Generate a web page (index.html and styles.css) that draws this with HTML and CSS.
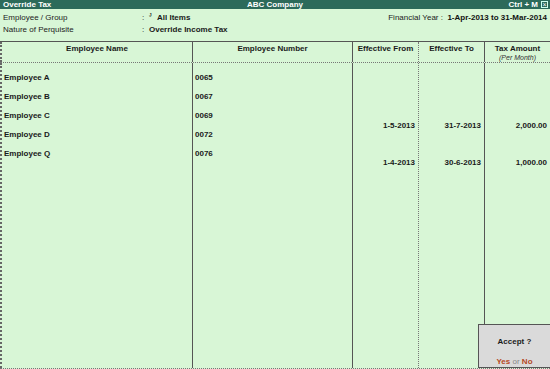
FILE: index.html
```html
<!DOCTYPE html>
<html>
<head>
<meta charset="utf-8">
<link rel="stylesheet" href="styles.css">
</head>
<body>
<div class="screen">
  <div class="titlebar">
    <span class="t-left">Override Tax</span>
    <span class="t-center">ABC Company</span>
    <span class="t-right">Ctrl + M <span class="close">×</span></span>
  </div>
  <div class="info">
    <div class="info-row">
      <span class="lbl">Employee / Group</span>
      <span class="colon">:</span>
      <span class="mark">ᴶ</span>
      <span class="val">All Items</span>
      <span class="fy">Financial Year :&nbsp; <b>1-Apr-2013 to 31-Mar-2014</b></span>
    </div>
    <div class="info-row">
      <span class="lbl">Nature of Perquisite</span>
      <span class="colon">:</span>
      <span class="val val2">Override Income Tax</span>
    </div>
  </div>
  <div class="table">
    <div class="head">
      <div class="hc c1">Employee Name</div>
      <div class="hc c2">Employee Number</div>
      <div class="hc c3">Effective From</div>
      <div class="hc c4">Effective To</div>
      <div class="hc c5">Tax Amount<span class="sub">(Per Month)</span></div>
    </div>
    <div class="body">
      <div class="col c1 names">
        <div class="line">Employee A</div>
        <div class="line">Employee B</div>
        <div class="line">Employee C</div>
        <div class="line">Employee D</div>
        <div class="line">Employee Q</div>
      </div>
      <div class="col c2 names">
        <div class="line">0065</div>
        <div class="line">0067</div>
        <div class="line">0069</div>
        <div class="line">0072</div>
        <div class="line">0076</div>
      </div>
      <div class="col c3 vals">
        <div class="line">1-5-2013</div>
        <div class="line">1-4-2013</div>
      </div>
      <div class="col c4 vals">
        <div class="line">31-7-2013</div>
        <div class="line">30-6-2013</div>
      </div>
      <div class="col c5 vals">
        <div class="line">2,000.00</div>
        <div class="line">1,000.00</div>
      </div>
    </div>
  </div>
  <div class="accept">
    <div class="q">Accept ?</div>
    <div class="yn"><span class="y">Yes</span> <span class="or">or</span> <span class="y">No</span></div>
  </div>
</div>
</body>
</html>
```

FILE: styles.css
```css
* { box-sizing: border-box; margin: 0; padding: 0; }
html, body { width: 550px; height: 369px; overflow: hidden; }
body { font-family: "Liberation Sans", Arial, sans-serif; font-size: 8px; color: #1a1a1a; background: #d8f6d6; }
.screen { position: relative; width: 550px; height: 369px; display: flex; flex-direction: column; background: #d8f6d6; }

.titlebar { height: 9px; background: #2c6a5a; color: #fff; font-weight: bold; font-size: 8px; line-height: 9px; display: flex; justify-content: space-between; align-items: center; padding: 0 2px 0 3px; position: relative; }
.t-center { position: absolute; left: 0; right: 0; text-align: center; pointer-events: none; }
.t-right { display: flex; align-items: center; gap: 3px; }
.close { display: inline-block; width: 7px; height: 7px; border: 1px solid #cfe; background: #2c6a5a; color: #fff; font-size: 7px; line-height: 5px; text-align: center; font-weight: normal; }

.info { height: 32px; padding-top: 2px; }
.info-row { display: flex; align-items: center; height: 12.5px; position: relative; }
.lbl { width: 142px; padding-left: 3px; color: #222; }
.colon { width: 7px; color: #222; }
.mark { width: 8px; font-size: 7px; font-weight: bold; position: relative; top: -2px; }
.val { font-weight: bold; }
.val2 { margin-left: 0; }
.fy { position: absolute; right: 3px; color: #222; }
.fy b { color: #111; }

.table { flex: 1; display: flex; flex-direction: column; border-top: 1px solid #555; }
.head { display: grid; grid-template-columns: 192px 160px 66px 66px 66px; height: 21px; border-bottom: 1px dotted #777; }
.hc { font-weight: bold; text-align: center; padding-top: 2px; line-height: 10px; display: flex; flex-direction: column; align-items: center; }
.sub { font-weight: normal; font-style: italic; font-size: 7px; line-height: 8px; color: #333; }
.c1 { border-left: 2px dotted #666; }
.c2 { border-left: 1px solid #555; }
.c3 { border-left: 1px solid #555; }
.c4 { border-left: 1px dotted #777; }
.c5 { border-left: 1px solid #555; }

.body { flex: 1; display: grid; grid-template-columns: 192px 160px 66px 66px 66px; border-bottom: 1px dotted #777; }
.col { display: flex; flex-direction: column; font-weight: bold; }
.line { height: 19px; line-height: 19px; }
.names { padding-top: 5px; padding-left: 2px; }
.c1.names { padding-left: 2px; }
.vals { padding-top: 53px; gap: 18px; text-align: right; padding-right: 3px; }

.accept { position: absolute; left: 478px; top: 324px; width: 72px; height: 44px; background: #dadada; border: 1px solid #555; border-right: none; display: flex; flex-direction: column; align-items: center; }
.q { font-weight: bold; margin-top: 12px; line-height: 10px; }
.yn { margin-top: 10px; line-height: 10px; font-weight: bold; }
.y { color: #b5481e; }
.or { color: #888; font-weight: normal; }
```
